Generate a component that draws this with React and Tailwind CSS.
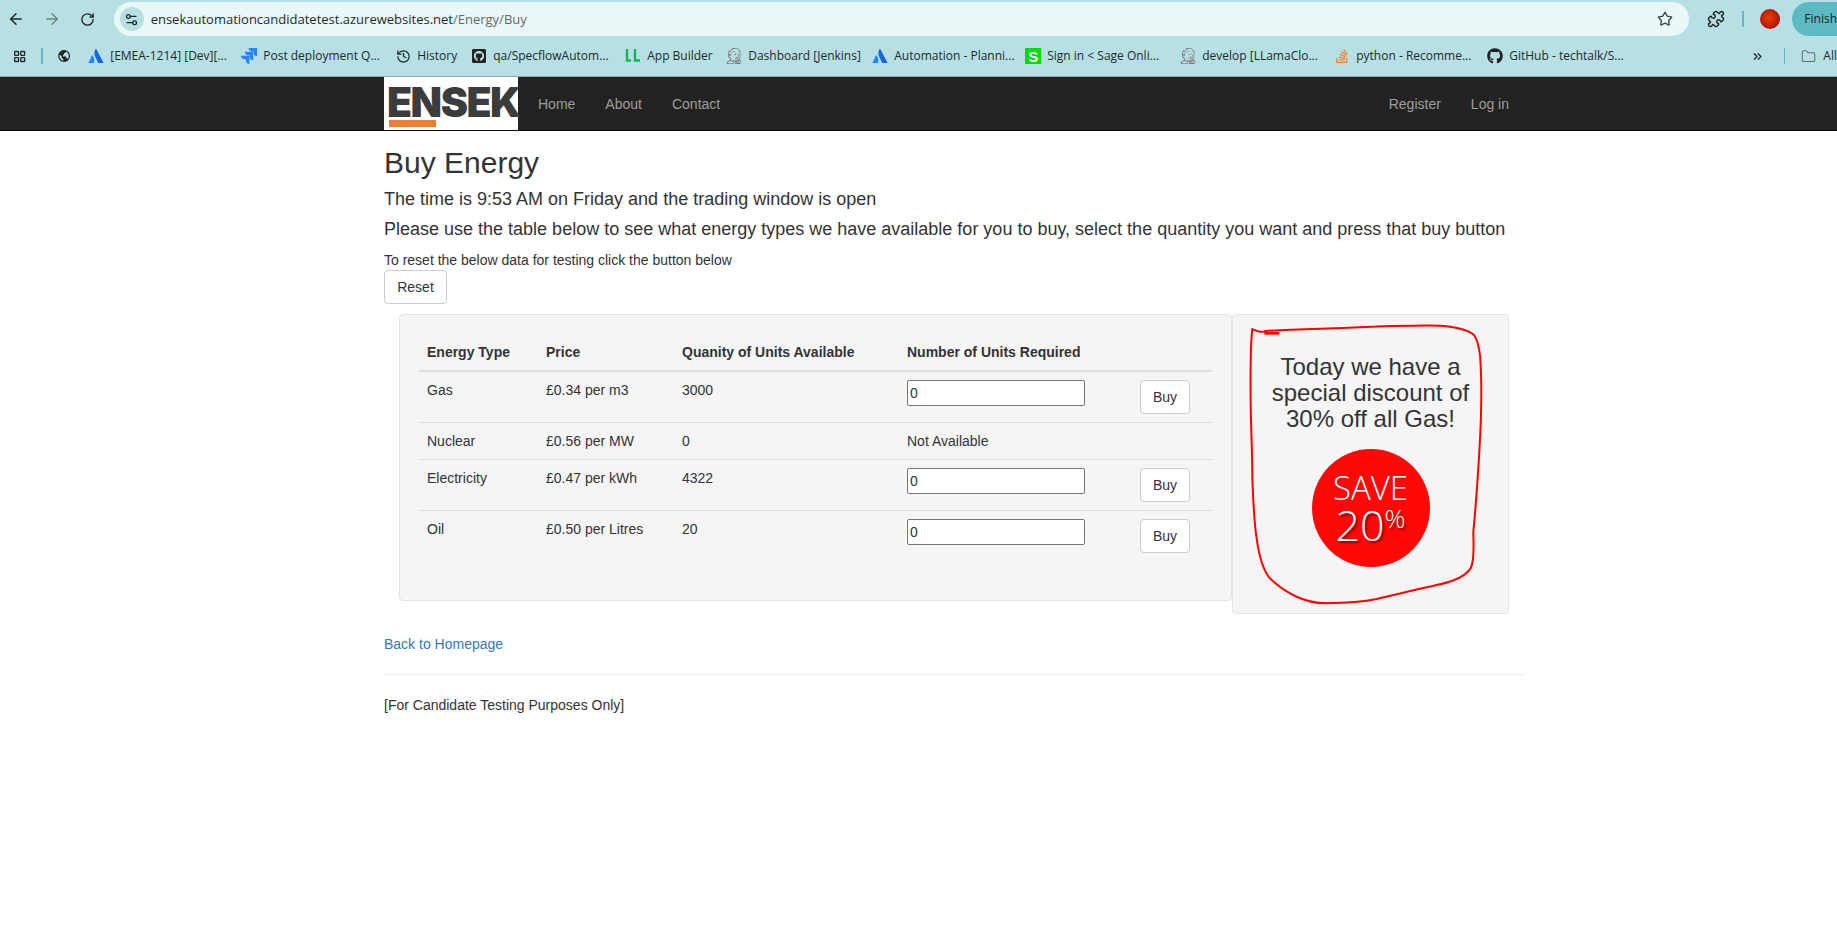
import React from 'react'
import { ArrowLeft, ArrowRight, RotateCw, Settings2, Star, Puzzle, History, Folder, ChevronsRight, LayoutGrid } from 'lucide-react'
import { FaGithub, FaGithubSquare, FaStackOverflow } from 'react-icons/fa'
import { SiJenkins, SiJira } from 'react-icons/si'
import { BiWorld } from 'react-icons/bi'

const AtlassianIcon = () => (
  <svg viewBox="0 0 16 16" className="h-4 w-4 shrink-0">
    <path d="M4.6 7.6c-.2-.3-.6-.3-.8.1L.6 14.4c-.2.3.1.7.4.7h4.5c.2 0 .3-.1.4-.3 1-2 .4-5.2-1.3-7.2z" fill="#2684ff" />
    <path d="M7.6.9C6 3.500 6.100 6.400 7.200 8.800l2.900 6c.1.200.2.300.4.300H15c.4 0 .6-.4.400-.7L8.300.9C8.100.6 7.800.6 7.600.9z" fill="#1868db" />
  </svg>
)

const LLIcon = () => (
  <svg viewBox="0 0 18 16" className="h-4 w-[18px] shrink-0" fill="none" stroke="#16b35a" strokeWidth="2.4">
    <path d="M3 1v11.500h4" />
    <path d="M11 1v11.500h5" />
  </svg>
)

const SageIcon = () => (
  <span className="flex h-4 w-4 shrink-0 items-center justify-center bg-[#00dc00] text-[15px] leading-none font-bold text-white font-['Liberation_Sans',sans-serif]">
    S
  </span>
)

const bookmarks = [
  { width: 'w-[153px]', gap: 'gap-[6px]', icon: <AtlassianIcon />, label: '[EMEA-1214] [Dev][...' },
  { width: 'w-[155px]', gap: 'gap-[6px]', icon: <SiJira className="h-4 w-4 shrink-0 text-[#2684ff]" />, label: 'Post deployment Q...' },
  { width: 'w-[75px]', gap: 'gap-[6px]', icon: <History size={15} className="shrink-0" />, label: 'History' },
  { width: 'w-[153px]', gap: 'gap-[6px]', icon: <FaGithubSquare className="h-4 w-4 shrink-0 text-[#222]" />, label: 'qa/SpecflowAutom...' },
  { width: 'w-[102px]', gap: 'gap-[5px]', icon: <LLIcon />, label: 'App Builder' },
  { width: 'w-[146px]', gap: 'gap-[6px]', icon: <SiJenkins className="h-4 w-4 shrink-0 text-[#6b5348]" />, label: 'Dashboard [Jenkins]' },
  { width: 'w-[153px]', gap: 'gap-[6px]', icon: <AtlassianIcon />, label: 'Automation - Planni...' },
  { width: 'w-[155px]', gap: 'gap-[6px]', icon: <SageIcon />, label: 'Sign in < Sage Onli...' },
  { width: 'w-[154px]', gap: 'gap-[6px]', icon: <SiJenkins className="h-4 w-4 shrink-0 text-[#6b5348]" />, label: 'develop [LLamaClo...' },
  { width: 'w-[153px]', gap: 'gap-[6px]', icon: <FaStackOverflow className="h-4 w-4 shrink-0 text-[#f48024]" />, label: 'python - Recomme...' },
  { width: 'w-[170px]', gap: 'gap-[6px]', icon: <FaGithub className="h-4 w-4 shrink-0 text-[#222]" />, label: 'GitHub - techtalk/S...' },
]

const rows = [
  { type: 'Gas', price: '£0.34 per m3', qty: '3000', available: true },
  { type: 'Nuclear', price: '£0.56 per MW', qty: '0', available: false },
  { type: 'Electricity', price: '£0.47 per kWh', qty: '4322', available: true },
  { type: 'Oil', price: '£0.50 per Litres', qty: '20', available: true },
]

function BrowserChrome() {
  return (
    <div className="h-[77px] overflow-hidden border-b border-[#8fa6a9] bg-[#b6e0e4] font-['Open_Sans',sans-serif] text-[#1f2a2c]">
      <div className="flex h-[36px] items-start pt-[2px]">
        <div className="flex h-[34px] w-[114px] items-center pl-[7px]">
          <ArrowLeft size={18} strokeWidth={2} className="text-[#20282a]" />
          <ArrowRight size={18} strokeWidth={2} className="ml-[18px] text-[#6e8487]" />
          <RotateCw size={15} strokeWidth={2.2} className="ml-[19px] text-[#20282a]" />
        </div>
        <div className="flex h-[34px] w-[1581px] items-center rounded-full bg-[#e9f7f7] pl-[6px] pr-[16px]">
          <span className="flex h-[24px] w-[24px] items-center justify-center rounded-full bg-[#b6e0e4]">
            <Settings2 size={15} className="text-[#20282a]" />
          </span>
          <span className="ml-[7px] text-[13px] whitespace-nowrap text-[#1f2a2c]">
            ensekautomationcandidatetest.azurewebsites.net<span className="text-[#5d6b6d]">/Energy/Buy</span>
          </span>
          <Star size={16} strokeWidth={2} className="ml-auto text-[#3a4547]" />
        </div>
        <div className="flex h-[34px] flex-1 items-center">
          <Puzzle size={18} strokeWidth={2} className="ml-[18px] text-[#20282a]" />
          <span className="ml-[17px] h-[16px] w-[2px] bg-[#5fbac3]" />
          <span className="ml-[16px] h-[20px] w-[20px] rounded-full bg-[radial-gradient(circle_at_45%_45%,#e8400c,#b01000_70%,#7a0a00)]" />
          <span className="ml-[12px] flex h-[34px] flex-1 items-center rounded-l-full bg-[#5cbac3] pl-[12px] text-[12px] text-[#14262a]">
            Finish
          </span>
        </div>
      </div>
      <div className="flex h-[40px] items-center pl-[13px] text-[12px] whitespace-nowrap">
        <LayoutGrid size={15} strokeWidth={2.4} className="text-[#20282a]" />
        <span className="ml-[15px] h-[16px] w-[2px] bg-[#5fbac3]" />
        <BiWorld className="ml-[14px] h-4 w-4 text-[#20282a]" />
        <div className="ml-[17px] flex items-center">
          {bookmarks.map((b) => (
            <div key={b.label} className={`flex items-center ${b.width} ${b.gap}`}>
              {b.icon}
              <span>{b.label}</span>
            </div>
          ))}
        </div>
        <ChevronsRight size={15} strokeWidth={2.2} className="ml-[94px] text-[#20282a]" />
        <span className="ml-[19px] h-[16px] w-[2px] bg-[#5fbac3]" />
        <Folder size={17} strokeWidth={1.6} className="ml-[16px] text-[#5d6b6d]" />
        <span className="ml-[7px]">All</span>
      </div>
    </div>
  )
}

function Navbar() {
  return (
    <nav className="h-[54px] border-b border-[#080808] bg-[#222] text-[14px] text-[#9d9d9d]">
      <div className="ml-[384px] flex h-[53px] w-[1140px] items-center">
        <div className="relative h-[53px] w-[134px] bg-white">
          <span className="absolute top-[2px] left-[3px] font-['Inter',sans-serif] text-[41px] leading-[46px] font-black tracking-[-1.500px] text-[#3c3c3c]">
            ENSEK
          </span>
          <span className="absolute top-[43px] left-[5px] h-[7px] w-[47px] bg-[#ed7d31]" />
        </div>
        <a className="ml-[20px]">Home</a>
        <a className="ml-[30px]">About</a>
        <a className="ml-[30px]">Contact</a>
        <a className="ml-auto">Register</a>
        <a className="mr-[15px] ml-[30px]">Log in</a>
      </div>
    </nav>
  )
}

function EnergyTable() {
  return (
    <div className="h-[287px] w-[833px] shrink-0 rounded-[4px] border border-[#e3e3e3] bg-[#f5f5f5] p-[19px]">
      <table className="w-[793px] table-fixed border-collapse text-left">
        <colgroup>
          <col className="w-[119px]" />
          <col className="w-[136px]" />
          <col className="w-[225px]" />
          <col className="w-[233px]" />
          <col className="w-[80px]" />
        </colgroup>
        <thead>
          <tr className="border-b-2 border-[#ddd]">
            <th className="p-2 font-bold">Energy Type</th>
            <th className="p-2 font-bold">Price</th>
            <th className="p-2 font-bold">Quanity of Units Available</th>
            <th className="p-2 font-bold">Number of Units Required</th>
            <th className="p-2" />
          </tr>
        </thead>
        <tbody>
          {rows.map((row) => (
            <tr key={row.type} className="border-b border-[#ddd] last:border-b-0">
              <td className="p-2 align-top">{row.type}</td>
              <td className="p-2 align-top">{row.price}</td>
              <td className="p-2 align-top">{row.qty}</td>
              <td className="p-2 align-top">
                {row.available ? (
                  <input
                    defaultValue="0"
                    className="block h-[26px] w-[178px] rounded-[2px] border border-[#767676] bg-white px-[2px] text-[14px] text-[#333]"
                  />
                ) : (
                  'Not Available'
                )}
              </td>
              <td className="p-2 align-top">
                {row.available && (
                  <button className="block h-[34px] w-[50px] rounded-[4px] border border-[#ccc] bg-white">Buy</button>
                )}
              </td>
            </tr>
          ))}
        </tbody>
      </table>
    </div>
  )
}

function OfferPanel() {
  return (
    <div className="relative h-[300px] w-[277px] shrink-0 rounded-[4px] border border-[#e3e3e3] bg-[#f5f5f5] p-[19px] text-center">
      <h3 className="mt-[20px] text-[24px] leading-[26px]">Today we have a special discount of 30% off all Gas!</h3>
      <div className="mx-auto mt-[17px] flex h-[118px] w-[118px] flex-col items-center justify-center rounded-full bg-[#ff0808] font-['Open_Sans',sans-serif] font-light text-white">
        <span className="text-[33px] leading-[34px]">SAVE</span>
        <span className="flex items-start text-[43px] leading-[40px] [text-shadow:2px_2px_2px_#8a0000]">
          20<span className="mt-[-2px] text-[26px] leading-[30px]">%</span>
        </span>
      </div>
      <svg
        viewBox="0 0 900 945"
        className="pointer-events-none absolute top-[-10px] left-[-13px] h-[315px] w-[300px]"
        fill="none"
        stroke="#ff0000"
      >
        <path
          strokeWidth="6"
          strokeLinejoin="round"
          d="M97 72 C92 110 91 200 92 300 C94 400 97 450 97 520 C100 600 103 660 110 700 C118 760 130 795 148 818 C170 840 195 858 225 873 C260 890 285 895 320 895 C370 894 420 892 470 882 C530 868 590 853 650 840 C700 830 735 815 752 790 C765 765 760 720 760 680 C766 620 772 540 778 440 C784 340 787 240 780 150 C775 115 770 100 762 90 C745 75 715 66 660 62 C560 60 440 66 340 70 C280 72 200 74 135 78 C125 85 110 78 97 72 Z"
        />
        <path strokeWidth="8" d="M133 85 H178" />
      </svg>
    </div>
  )
}

export default function App() {
  return (
    <div className="min-h-[944px] overflow-hidden bg-white font-['Liberation_Sans',Arial,sans-serif] text-[14px] leading-[20px] text-[#333]">
      <BrowserChrome />
      <Navbar />
      <main className="ml-[384px] w-[1140px]">
        <h2 className="mt-[15px] text-[30px] leading-[33px]">Buy Energy</h2>
        <p className="mt-[10px] text-[18px]">The time is 9:53 AM on Friday and the trading window is open</p>
        <p className="mt-[10px] text-[18px]">
          Please use the table below to see what energy types we have available for you to buy, select the quantity you want and press that buy button
        </p>
        <p className="mt-[11px]">To reset the below data for testing click the button below</p>
        <button className="block h-[34px] w-[63px] rounded-[4px] border border-[#ccc] bg-white">Reset</button>
        <div className="mt-[10px] ml-[15px] flex items-start">
          <EnergyTable />
          <OfferPanel />
        </div>
        <a className="mt-[20px] block text-[#337ab7]">Back to Homepage</a>
        <hr className="mt-[20px] border-[#eee]" />
        <p className="mt-[20px]">[For Candidate Testing Purposes Only]</p>
      </main>
    </div>
  )
}
